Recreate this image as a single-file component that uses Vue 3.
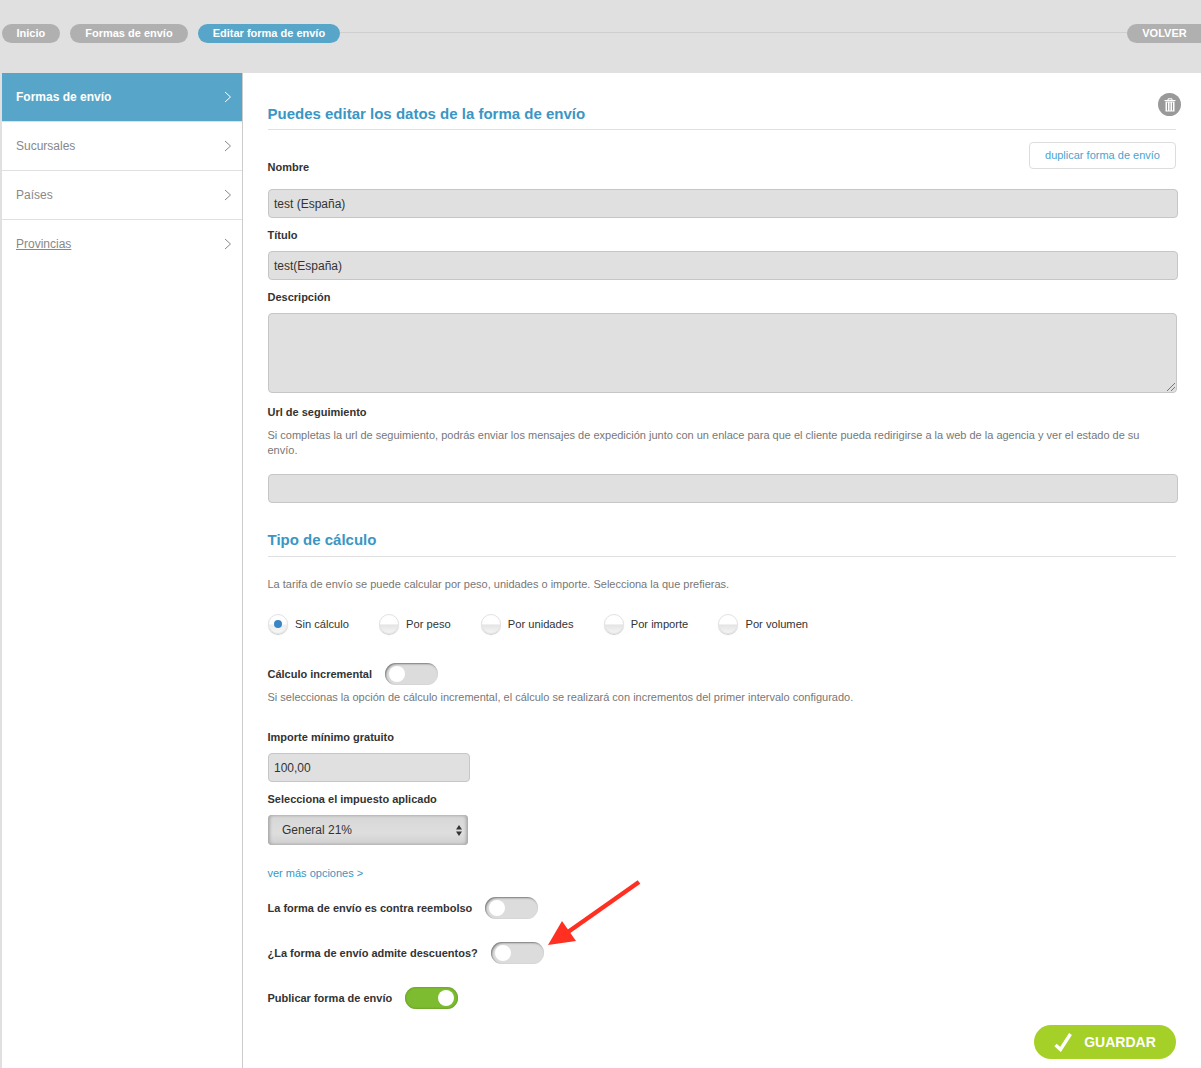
<script setup>
const crumbs = [
  { label: 'Inicio' },
  { label: 'Formas de envío' },
  { label: 'Editar forma de envío', active: true },
]
const menu = [
  { label: 'Formas de envío', active: true },
  { label: 'Sucursales' },
  { label: 'Países' },
  { label: 'Provincias', link: true },
]
const radios = [
  { label: 'Sin cálculo', on: true },
  { label: 'Por peso' },
  { label: 'Por unidades' },
  { label: 'Por importe' },
  { label: 'Por volumen' },
]
</script>

<template>
  <div class="page">
    <header class="top">
      <nav class="crumbs">
        <a v-for="c in crumbs" :key="c.label" class="pill" :class="{ 'pill-on': c.active }">{{ c.label }}</a>
        <span class="rule"></span>
        <a class="pill back">VOLVER</a>
      </nav>
    </header>

    <div class="body">
      <aside class="side">
        <a v-for="m in menu" :key="m.label" class="item" :class="{ 'item-on': m.active }">
          <span :class="{ under: m.link }">{{ m.label }}</span>
          <svg width="8" height="12" viewBox="0 0 8 12" class="chev"><path d="M1 1l5.5 5L1 11" fill="none" stroke="currentColor" stroke-width="1"/></svg>
        </a>
      </aside>

      <main class="main">
        <div class="trash">
          <svg width="12" height="14" viewBox="0 0 12 14">
            <path d="M0.5 2.5h11M4 2V0.8h4V2" fill="none" stroke="#fff" stroke-width="1"/>
            <path d="M1.5 3.5h9V13.5h-9z" fill="#fff"/>
            <path d="M3.5 4.5v8M6 4.5v8M8.5 4.5v8" stroke="#999" stroke-width="1"/>
          </svg>
        </div>
        <h2 class="title first">Puedes editar los datos de la forma de envío</h2>

        <div class="name-row">
          <label class="lab name-lab">Nombre</label>
          <a class="dup">duplicar forma de envío</a>
        </div>
        <div class="inp wide mt-name">test (España)</div>

        <label class="lab mt-lab">Título</label>
        <div class="inp wide mt-inp">test(España)</div>

        <label class="lab mt-lab">Descripción</label>
        <div class="area mt-inp">
          <svg width="10" height="10" viewBox="0 0 10 10" class="grip"><path d="M9 1L1 9M9 5L5 9" stroke="#777" stroke-width="1"/></svg>
        </div>

        <label class="lab mt-url">Url de seguimiento</label>
        <p class="help mt-help">Si completas la url de seguimiento, podrás enviar los mensajes de expedición junto con un enlace para que el cliente pueda redirigirse a la web de la agencia y ver el estado de su envío.</p>
        <div class="inp wide mt-urlinp"></div>

        <h2 class="title second">Tipo de cálculo</h2>
        <p class="help mt-tarifa">La tarifa de envío se puede calcular por peso, unidades o importe. Selecciona la que prefieras.</p>

        <div class="radios">
          <div v-for="r in radios" :key="r.label" class="radio">
            <span class="dot" :class="{ 'dot-on': r.on }"></span>
            <span>{{ r.label }}</span>
          </div>
        </div>

        <div class="sw-row mt-inc">
          <label class="lab">Cálculo incremental</label>
          <span class="sw"><i></i></span>
        </div>
        <p class="help mt-inchelp">Si seleccionas la opción de cálculo incremental, el cálculo se realizará con incrementos del primer intervalo configurado.</p>

        <label class="lab mt-imp">Importe mínimo gratuito</label>
        <div class="inp small mt-inp">100,00</div>

        <label class="lab mt-lab">Selecciona el impuesto aplicado</label>
        <div class="sel mt-inp">
          <span>General 21%</span>
          <svg width="6" height="11" viewBox="0 0 6 11"><path d="M3 0l3 4.4H0zM3 11l3-4.4H0z" fill="#333"/></svg>
        </div>

        <a class="more">ver más opciones &gt;</a>

        <div class="sw-row mt-sw1">
          <label class="lab">La forma de envío es contra reembolso</label>
          <span class="sw"><i></i></span>
        </div>
        <div class="sw-row mt-sw2">
          <label class="lab">¿La forma de envío admite descuentos?</label>
          <span class="sw sw-nudge"><i></i></span>
        </div>
        <div class="sw-row mt-sw2">
          <label class="lab">Publicar forma de envío</label>
          <span class="sw sw-on"><i></i></span>
        </div>

        <div class="save-row">
          <a class="save">
            <svg width="20" height="20" viewBox="0 0 20 20"><path d="M1.5 13L6.5 17.5L16.5 2" fill="none" stroke="#fff" stroke-width="3.4"/></svg>
            GUARDAR
          </a>
        </div>
      </main>
    </div>

    <svg class="arrow" width="100" height="72" viewBox="0 0 100 72">
      <path d="M91 3L20 53" stroke="#ff3021" stroke-width="4.5" fill="none"/>
      <path d="M0 66L14 42L28 62z" fill="#ff3021"/>
    </svg>
  </div>
</template>

<style>
html, body { margin: 0; background: #fff; }
</style>

<style scoped>
.page {
  position: relative;
  width: 1201px;
  height: 1068px;
  overflow: hidden;
  background: #e0e0e0;
  font-family: "Liberation Sans", Arial, sans-serif;
  display: flex;
  flex-direction: column;
  color: #333;
}
.top { height: 73px; flex: none; box-sizing: border-box; padding: 24px 0 0 2px; }
.crumbs { display: flex; align-items: center; gap: 10px; }
.pill {
  height: 19px;
  line-height: 19px;
  border-radius: 10px;
  background: #b0b0b0;
  color: #fff;
  font-size: 11px;
  font-weight: bold;
  padding: 0 14.5px;
  white-space: nowrap;
}
.pill:nth-child(2) { padding: 0 15.5px; }
.pill-on { background: #57a6c9; }
.rule { flex: 1; height: 1px; background: #cfcfcf; margin: 0 -10px 2px; }
.back { padding: 0 14px 0 15px; border-radius: 10px 0 0 10px; width: 45px; text-align: center; font-size: 11px; }
.body { flex: 1; display: flex; padding-left: 2px; min-height: 0; }
.side {
  width: 240px;
  flex: none;
  background: #fff;
  border-right: 1px solid #ccc;
}
.item {
  height: 48px;
  border-bottom: 1px solid #e0e0e0;
  display: flex;
  align-items: center;
  justify-content: space-between;
  padding: 0 10px 0 14px;
  font-size: 12px;
  color: #888;
}
.item:last-child { border-bottom: 0; }
.item-on { background: #57a6c9; color: #fff; font-weight: bold; border-bottom: 1px solid #e0e0e0; }
.under { text-decoration: underline; }
.chev { flex: none; }
.main {
  position: relative;
  flex: 1;
  min-width: 0;
  background: #fff;
  padding-left: 25px;
  padding-right: 25px;
  display: flex;
  flex-direction: column;
  align-items: flex-start;
}
.trash {
  position: absolute;
  top: 20px;
  right: 20px;
  width: 23px;
  height: 23px;
  border-radius: 50%;
  background: #999;
  display: flex;
  align-items: center;
  justify-content: center;
}
.title {
  align-self: stretch;
  margin: 0;
  font-size: 15px;
  line-height: 20px;
  font-weight: bold;
  color: #3a96c4;
  border-bottom: 1px solid #e0e0e0;
  text-indent: -0.5px;
}
.first { margin-top: 31px; padding-bottom: 5px; }
.second { margin-top: 27px; padding-bottom: 6px; }
.lab {
  display: block;
  font-size: 11px;
  line-height: 14px;
  font-weight: bold;
  color: #333;
  white-space: nowrap;
  margin-left: -0.5px;
}
.name-row {
  align-self: stretch;
  display: flex;
  justify-content: space-between;
  align-items: flex-end;
  margin-top: 12px;
  height: 27px;
}
.name-lab { margin-bottom: -5px; }
.dup {
  box-sizing: border-box;
  width: 147px;
  height: 27px;
  line-height: 25px;
  text-align: center;
  border: 1px solid #ddd;
  border-radius: 4px;
  color: #4aa3cf;
  font-size: 11px;
}
.inp {
  box-sizing: border-box;
  height: 29px;
  line-height: 28px;
  background: #e0e0e0;
  border: 1px solid #c6c6c6;
  border-radius: 4px;
  padding: 0 5px 0 5px;
  font-size: 12px;
  color: #333;
}
.wide { width: 910px; }
.small { width: 202px; }
.mt-name { margin-top: 20px; }
.mt-lab { margin-top: 10px; }
.mt-inp { margin-top: 9px; }
.area {
  position: relative;
  box-sizing: border-box;
  width: 909px;
  height: 80px;
  background: #e0e0e0;
  border: 1px solid #c6c6c6;
  border-radius: 4px;
}
.grip { position: absolute; right: 0; bottom: 0; }
.mt-url { margin-top: 12px; }
.help {
  margin: 0;
  font-size: 11px;
  line-height: 15px;
  color: #777;
  margin-left: -0.5px;
}
.mt-help { margin-top: 9px; width: 880px; }
.mt-urlinp { margin-top: 16px; }
.mt-tarifa { margin-top: 20px; }
.radios {
  display: flex;
  gap: 30.2px;
  margin-top: 22px;
  font-size: 11.15px;
  color: #333;
}
.radio { display: flex; align-items: center; gap: 7px; height: 20px; line-height: 20px; }
.dot {
  box-sizing: border-box;
  width: 20px;
  height: 20px;
  border-radius: 50%;
  border: 1px solid #e2e2e2;
  background: linear-gradient(#fff 50%, #e4e4e4 55%, #f4f4f4);
  box-shadow: 0 1px 1px #ccc;
  position: relative;
}
.dot-on { background: linear-gradient(#fff 50%, #eee 55%, #f6f6f6); }
.dot-on::after {
  content: "";
  position: absolute;
  left: 5px;
  top: 5px;
  width: 8px;
  height: 8px;
  border-radius: 50%;
  background: #3a86c4;
}
.sw-row { display: flex; align-items: center; gap: 12.5px; height: 22px; }
.sw {
  position: relative;
  box-sizing: border-box;
  display: block;
  width: 53px;
  height: 22px;
  border-radius: 11px;
  background: #dcdcdc;
  box-shadow: inset 1px 1px 2px #777;
}
.sw-nudge { margin-left: 0.7px; }
.sw i {
  position: absolute;
  left: 4px;
  top: 3px;
  width: 16px;
  height: 16px;
  border-radius: 50%;
  background: #fff;
}
.sw-on { background: #7dbb30; box-shadow: inset 0 0 2px #4d7d1a; }
.sw-on i { left: 33px; }
.mt-inc { margin-top: 29px; }
.mt-inchelp { margin-top: 5px; }
.mt-imp { margin-top: 25px; }
.sel {
  box-sizing: border-box;
  width: 200px;
  height: 30px;
  border-radius: 4px;
  background: linear-gradient(#d6d6d6, #dedede 60%, #cfcfcf);
  box-shadow: inset 2px 0 3px #aaa, inset -2px 0 3px #aaa;
  display: flex;
  align-items: center;
  justify-content: space-between;
  padding: 0 6px 0 14px;
  font-size: 12px;
  color: #333;
}
.more { margin-top: 21px; font-size: 11px; line-height: 14px; color: #3a96c4; margin-left: -0.5px; }
.mt-sw1 { margin-top: 17px; }
.mt-sw2 { margin-top: 23px; }
.save-row { align-self: stretch; display: flex; justify-content: flex-end; margin-top: 16px; }
.save {
  box-sizing: border-box;
  width: 142px;
  height: 34px;
  border-radius: 17px;
  background: #a5d027;
  color: #fff;
  font-size: 14px;
  font-weight: bold;
  display: flex;
  align-items: center;
  justify-content: center;
  gap: 10px;
}
.arrow { position: absolute; left: 548px; top: 879px; }
</style>
